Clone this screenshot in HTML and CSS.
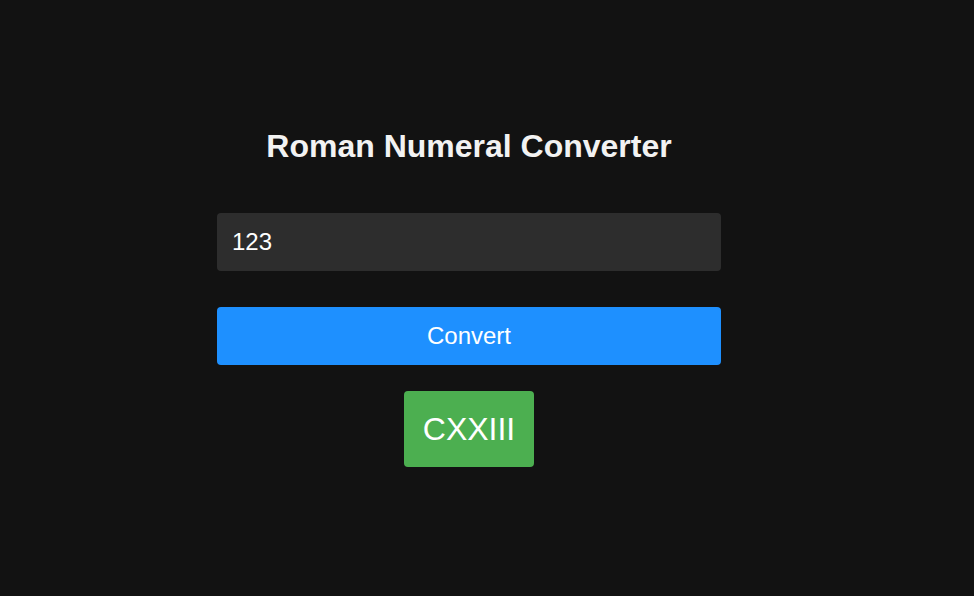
FILE: index.html
```html
<!DOCTYPE html>
<html lang="en">
<head>
<meta charset="utf-8">
<title>Roman Numeral Converter</title>
<link rel="stylesheet" href="styles.css">
</head>
<body>
<main class="app">
  <h1 class="title">Roman Numeral Converter</h1>
  <input class="number-input" type="text" value="123">
  <button class="convert-btn">Convert</button>
  <div class="result-row"><div class="result">CXXIII</div></div>
</main>
</body>
</html>
```
FILE: styles.css
```css
html, body {
  margin: 0;
  padding: 0;
  background: #121212;
  height: 100%;
}
body {
  font-family: "Liberation Sans", Arial, sans-serif;
  color: #f0f0f0;
  padding-right: 36px;
  box-sizing: border-box;
}
.app {
  width: 504px;
  margin: 0 auto;
  padding-top: 128px;
  display: flex;
  flex-direction: column;
}
.title {
  margin: 0 0 48px;
  font-size: 32px;
  font-weight: bold;
  text-align: center;
  line-height: 37px;
  color: #f2f2f2;
}
.number-input {
  box-sizing: border-box;
  width: 100%;
  height: 58px;
  padding: 0 15px;
  border: none;
  border-radius: 4px;
  background: #2d2d2d;
  color: #ffffff;
  font-family: "Liberation Sans", Arial, sans-serif;
  font-size: 24px;
  outline: none;
}
.convert-btn {
  margin-top: 36px;
  width: 100%;
  height: 58px;
  border: none;
  border-radius: 4px;
  background: #1e90ff;
  color: #ffffff;
  font-family: "Liberation Sans", Arial, sans-serif;
  font-size: 24px;
  cursor: pointer;
}
.result-row {
  margin-top: 26px;
  display: flex;
  justify-content: center;
}
.result {
  background: #4caf50;
  color: #ffffff;
  font-size: 32px;
  line-height: 36px;
  padding: 20px 19px;
  border-radius: 4px;
}
```
